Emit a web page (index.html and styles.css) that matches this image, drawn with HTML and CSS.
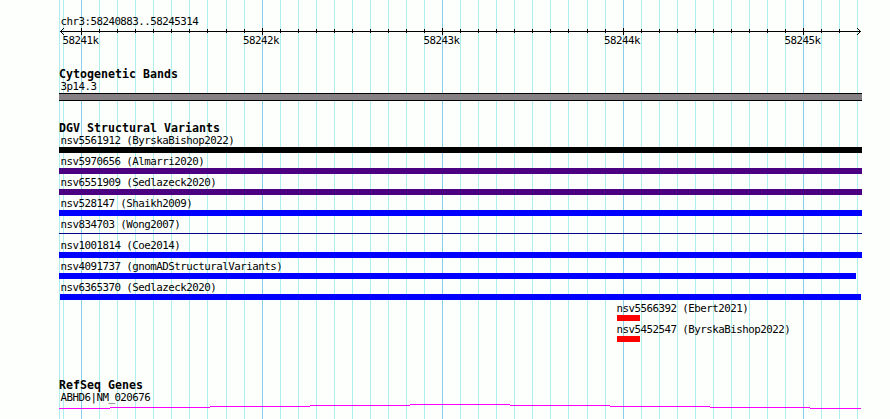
FILE: index.html
```html
<!DOCTYPE html>
<html lang="en">

<head>
    <meta charset="UTF-8">
    <meta name="viewport" content="width=device-width, initial-scale=1.0">
    <title>chr3:58240883..58245314</title>
    <link rel="stylesheet" href="styles.css">
</head>

<body>
    <div class="browser">
        <svg class="grid" width="890" height="419" shape-rendering="crispEdges">
            <path id="grid-minor" class="grid-minor" />
            <path id="grid-major" class="grid-major" />
        </svg>

        <div class="tracks">
            <div class="scale">
                <div class="label">chr3:58240883..58245314</div>
                <svg class="axis" width="804" height="8" shape-rendering="crispEdges">
                    <path d="M1 3.5H802" />
                    <path id="ticks" />
                    <path d="M1 3h1v1h-1zM2 2h1v3h-1zM3 1h1v1h-1zM3 5h1v1h-1zM4 0h1v1h-1zM4 6h1v1h-1z" class="arrow" />
                    <path d="M801 3h1v1h-1zM800 2h1v3h-1zM799 1h1v1h-1zM799 5h1v1h-1zM798 0h1v1h-1zM798 6h1v1h-1z" class="arrow" />
                </svg>
                <div class="numbers">
                    <span>58241k</span>
                    <span>58242k</span>
                    <span>58243k</span>
                    <span>58244k</span>
                    <span>58245k</span>
                </div>
            </div>

            <div class="track cytobands">
                <h2>Cytogenetic Bands</h2>
                <div class="label">3p14.3</div>
                <div class="band"></div>
            </div>

            <div class="track variants">
                <h2>DGV Structural Variants</h2>
                <div class="variant complex">
                    <div class="label">nsv5561912 (ByrskaBishop2022)</div>
                    <div class="bar"></div>
                </div>
                <div class="variant inversion">
                    <div class="label">nsv5970656 (Almarri2020)</div>
                    <div class="bar"></div>
                </div>
                <div class="variant inversion">
                    <div class="label">nsv6551909 (Sedlazeck2020)</div>
                    <div class="bar"></div>
                </div>
                <div class="variant gain">
                    <div class="label">nsv528147 (Shaikh2009)</div>
                    <div class="bar"></div>
                </div>
                <div class="variant thin">
                    <div class="label">nsv834703 (Wong2007)</div>
                    <div class="bar"></div>
                </div>
                <div class="variant gain">
                    <div class="label">nsv1001814 (Coe2014)</div>
                    <div class="bar"></div>
                </div>
                <div class="variant gain short">
                    <div class="label">nsv4091737 (gnomADStructuralVariants)</div>
                    <div class="bar"></div>
                </div>
                <div class="variant gain inset">
                    <div class="label">nsv6365370 (Sedlazeck2020)</div>
                    <div class="bar"></div>
                </div>
                <div class="variant loss">
                    <div class="label">nsv5566392 (Ebert2021)</div>
                    <div class="bar"></div>
                </div>
                <div class="variant loss">
                    <div class="label">nsv5452547 (ByrskaBishop2022)</div>
                    <div class="bar"></div>
                </div>
            </div>

            <div class="track genes">
                <h2>RefSeq Genes</h2>
                <div class="label">ABHD6|NM_020676</div>
                <svg class="intron" width="804" height="6" shape-rendering="crispEdges">
                    <path d="M0 4.5H51M51 3.5H151M151 2.5H251M251 1.5H351M351 .5H451M451 1.5H551M551 2.5H651M651 3.5H751M751 4.5H802" />
                </svg>
            </div>
        </div>
    </div>

    <script>
        const major = [81, 262, 442, 623, 803];
        const minor = [59, 63];
        const left = 59;

        // nine minor lines after every major one, up to the end of the region
        major.forEach((start, n) => {
            for (let i = 1; i < 10; i++) {
                // 18.05px per 100 bases: the spare pixel falls in every other thousand
                const x = start + i * 18 + (n % 2 === 0 && i > 7 ? 1 : 0);
                if (x < 861) minor.push(x);
            }
        });

        const lines = (list, y, h) => list.map(x => `M${x + 0.5} ${y}v${h}`).join('');

        document.getElementById('grid-minor').setAttribute('d', lines(minor, 0, 419));
        document.getElementById('grid-major').setAttribute('d', lines(major, 0, 419));

        const minorTicks = minor.filter(x => x > 63 && x < 857).map(x => x - left);
        const majorTicks = major.map(x => x - left);
        document.getElementById('ticks').setAttribute('d', lines(minorTicks, 1, 4) + lines(majorTicks, 0, 7));
    </script>
</body>

</html>
```
FILE: styles.css
```css
body {
    margin: 0;
    background-color: #fdfffc;
    color: #000;
    font-family: "DejaVu Sans Mono", monospace;
}

svg {
    display: block;
    fill: none;
}

.browser {
    position: relative;
    width: 890px;
    height: 419px;
    overflow: hidden;
}

.grid {
    position: absolute;
    top: 0;
    left: 0;
}

.grid-minor {
    stroke: #afeeee;
}

.grid-major {
    stroke: #87ceeb;
}

.tracks {
    position: relative;
    width: 803px;
    padding: 15px 0 0 59px;
}

.label {
    height: 13px;
    padding-left: 1.4px;
    font-size: 10.8px;
    line-height: 13px;
    letter-spacing: -0.502px;
    white-space: pre;
}

h2 {
    height: 12px;
    margin: 0;
    font-size: 11.6px;
    line-height: 12px;
    letter-spacing: 0.016px;
    font-weight: bold;
    white-space: pre;
}

/* scale */
.scale {
    height: 53px;
}

.axis {
    stroke: #000;
}

.axis .arrow {
    stroke: none;
    fill: #000;
}

.numbers {
    display: flex;
    gap: 144.5px;
    padding-left: 3.6px;
    margin-top: -2px;
    font-size: 10.8px;
    line-height: 13px;
    letter-spacing: -0.502px;
}

.numbers span {
    width: 36px;
}

/* tracks */
.cytobands {
    height: 54px;
}

.band {
    height: 6px;
    border: solid #000;
    border-width: 1px 0;
    background-color: #848084;
}

.variants {
    height: 257px;
}

.variant {
    height: 21px;
}

.bar {
    height: 6px;
}

.complex .bar {
    background-color: #000;
}

.inversion .bar {
    background-color: #4b0082;
}

.gain .bar {
    background-color: #00f;
}

.thin .bar {
    height: 1px;
    margin-top: 2px;
    background-color: #00008b;
}

.short .bar {
    width: 797px;
}

.inset .bar {
    margin: 0 1px;
}

.loss {
    padding-left: 556px;
}

.loss .label {
    padding-left: 1.4px;
}

.loss .bar {
    width: 23px;
    margin-left: 2px;
    background-color: #f00;
}

.intron {
    stroke: #f0f;
}
```
